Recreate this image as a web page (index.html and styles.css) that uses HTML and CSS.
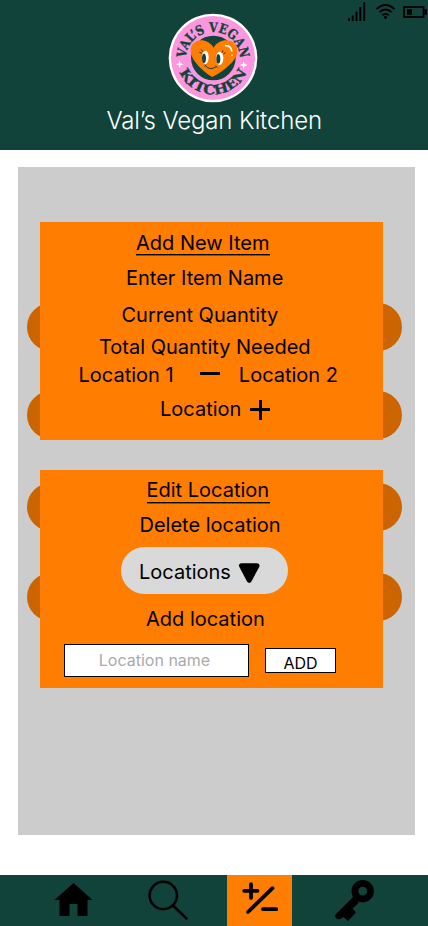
FILE: index.html
```
<!DOCTYPE html>
<html lang="en">
<head>
    <meta charset="UTF-8">
    <meta name="viewport" content="width=device-width, initial-scale=1.0">
    <title>Val’s Vegan Kitchen</title>
    <link rel="stylesheet" href="styles.css">
</head>
<body>
    <header>
        <svg class="status" viewBox="0 0 90 28">
            <path d="M11 18v3M14.7 15.500v5.500M18.500 11.500v9.500M22.300 7v14M26.200 2.300v18.700" stroke="#000" stroke-width="1.900" fill="none"/>
            <path d="M38.500 9.200Q47.500 0.800 56.500 9.200M41.500 12.200Q47.500 6.800 53.500 12.200M44.400 15.200Q47.500 12.500 50.600 15.200" stroke="#000" stroke-width="1.800" fill="none"/>
            <circle cx="47.500" cy="17.300" r="1.600"/>
            <rect x="66" y="7" width="19.500" height="10" fill="none" stroke="#000" stroke-width="1.800"/>
            <rect x="69" y="9.300" width="5" height="5.500"/>
            <rect x="86.300" y="9.300" width="2.600" height="5.500"/>
        </svg>
        <svg class="logo" viewBox="0 0 270 270">
            <defs>
                <path id="top-arc" d="M54 138A81 81 0 0 1 216 138"/>
                <path id="bottom-arc" d="M26 135A109 109 0 0 0 244 135"/>
            </defs>
            <circle cx="135" cy="135" r="133" fill="#fff"/>
            <circle cx="135" cy="135" r="126" fill="#fb96df"/>
            <circle cx="136" cy="135" r="67" fill="#11433a"/>
            <path d="M133 192C108 177 68 142 68 113C68 78 114 69 137 104C158 69 208 78 208 114C208 145 161 178 133 192Z" fill="#ff7d00"/>
            <path d="M173 98Q189 98 191 114" fill="none" stroke="#fff" stroke-width="5" stroke-linecap="round"/>
            <circle cx="192" cy="127" r="2.500" fill="#fff"/>
            <ellipse cx="112" cy="133" rx="10" ry="20" fill="#fff"/>
            <ellipse cx="155" cy="136" rx="11" ry="20" fill="#fff"/>
            <ellipse cx="108" cy="136" rx="6" ry="14" fill="#11433a"/>
            <ellipse cx="151" cy="138" rx="6" ry="14" fill="#11433a"/>
            <path d="M112 158Q125 174 145 161M109 160l6-4M142 158l6 6M102 121l-8-3M105 116l-6-7M162 119l3-7M166 123l7-4" fill="none" stroke="#11433a" stroke-width="3"/>
            <path d="M35 142l3 9 9 3-9 3-3 9-3-9-9-3 9-3zM227 144l3 9 9 3-9 3-3 9-3-9-9-3 9-3z" fill="#fff"/>
            <text class="logo-text"><textPath href="#top-arc" startOffset="3" textLength="249" lengthAdjust="spacingAndGlyphs">VAL’S VEGAN</textPath></text>
            <text class="logo-text"><textPath href="#bottom-arc" startOffset="43" textLength="256" lengthAdjust="spacingAndGlyphs">KITCHEN</textPath></text>
        </svg>
        <h1>Val’s Vegan Kitchen</h1>
    </header>
    <main>
        <section class="card add-item">
            <h2>Add New Item</h2>
            <p class="item-name">Enter Item Name</p>
            <p class="current">Current Quantity</p>
            <p class="total">Total Quantity Needed</p>
            <div class="locations">
                <span>Location 1</span>
                <svg class="minus" viewBox="0 0 20 20"><path d="M0 8.500h20" stroke="#000" stroke-width="3"/></svg>
                <span>Location 2</span>
            </div>
            <div class="new-location">
                <span>Location</span>
                <svg class="plus" viewBox="0 0 20 20"><path d="M0 9.500h20M10.500 0v20" stroke="#000" stroke-width="3"/></svg>
            </div>
        </section>
        <section class="card edit-location">
            <h2>Edit Location</h2>
            <p class="delete">Delete location</p>
            <div class="dropdown">
                <span>Locations</span>
                <svg viewBox="0 0 22 20"><path d="M3.500 2.700h15.500L11.200 17.300z" stroke="#000" stroke-width="5" stroke-linejoin="round"/></svg>
            </div>
            <p class="add">Add location</p>
            <form>
                <input type="text" placeholder="Location name">
                <button type="button">ADD</button>
            </form>
        </section>
    </main>
    <nav>
        <a href="#home" class="home">
            <svg viewBox="0 0 38 34"><path d="M19 0L38 17h-5v16H23V21h-8v12H5V17H0z"/></svg>
        </a>
        <a href="#search" class="search">
            <svg viewBox="0 0 41 41"><path d="M29 15.500A13.700 13.700 0 1 1 1.600 15.500A13.700 13.700 0 1 1 29 15.500M25 25.500L38.500 38.500" fill="none" stroke="#000" stroke-width="2.600" stroke-linecap="round"/></svg>
        </a>
        <a href="#edit" class="edit active">
            <svg viewBox="0 0 36 33"><path d="M2.200 8.800h13.300M9 2.200v13.700M6 30L30.500 6.200M21 27.200h13.300" fill="none" stroke="#000" stroke-width="3.800" stroke-linecap="round"/></svg>
        </a>
        <a href="#login" class="login">
            <svg viewBox="0 0 40 42">
                <circle cx="27.700" cy="11.200" r="7.800" fill="none" stroke="#000" stroke-width="6.800"/>
                <path d="M19 18.500L24 22.500 17.500 28.500 21 32.500 13 41 8.500 37 5.500 39Q2 40 .500 37.500Q-.500 35.500 1.500 33.500L19 16z"/>
            </svg>
        </a>
    </nav>
</body>
</html>
```
FILE: styles.css
```
body {
    margin: 0;
    width: 428px;
    height: 926px;
    display: flex;
    flex-direction: column;
    background-color: #fff;
    color: #000;
    font-family: Inter, sans-serif;
    font-size: 20px;
    line-height: 24px;
}

* {
    box-sizing: border-box;
}

svg {
    display: block;
    flex: none;
}

h2, p {
    margin: 0;
    font-size: 20px;
    font-weight: 400;
}

header {
    position: relative;
    height: 150px;
    padding-top: 13px;
    background-color: #11433a;
    color: white;
}

    header h1 {
        margin: 3px 0 0 106.500px;
        font-size: 24px;
        line-height: 30px;
        font-weight: 350;
        letter-spacing: -0.15px;
        white-space: nowrap;
    }

.status {
    position: absolute;
    top: 0;
    right: 0;
    width: 90px;
    height: 28px;
}

.logo {
    width: 90px;
    height: 90px;
    margin-left: 167.600px;
}

.logo-text {
    font-family: "DejaVu Serif", serif;
    font-weight: 700;
    font-size: 40px;
    fill: #11433a;
    stroke: #11433a;
    stroke-width: 1px;
}

main {
    width: 397px;
    height: 668px;
    margin: 17px 0 40px 18px;
    padding: 55px 32px 0 22px;
    display: flex;
    flex-direction: column;
    gap: 30px;
    background-color: #ccc;
}

.card {
    position: relative;
    z-index: 0;
    height: 218px;
    background-color: #ff7d00;
    white-space: nowrap;
}

    .card h2 {
        width: max-content;
        height: 24px;
        padding-right: 0.5px;
        border-bottom: 1px solid #000;
        box-shadow: 0 1px 0 rgba(0, 0, 0, 0.4);
    }

    /* rounded tabs sticking out on both sides */
    .card::before,
    .card::after {
        content: "";
        position: absolute;
        z-index: -1;
        left: -13px;
        right: -19px;
        height: 48px;
        border-radius: 24px;
        background: linear-gradient(to right, #cc6400 13px, #ff7d00 13px, #ff7d00 356px, #cc6400 356px);
    }

.add-item {
    padding-top: 9px;
}

    .add-item::before {
        top: 81.400px;
    }

    .add-item::after {
        top: 169.400px;
    }

    .add-item h2 {
        margin-left: 96px;
    }

.item-name {
    margin: 11px 0 0 86px;
}

.current {
    margin: 13px 0 0 81.500px;
}

.total {
    margin: 8px 0 0 59px;
}

.locations {
    display: flex;
    margin: 4px 0 0 38.500px;
}

.minus {
    width: 20px;
    height: 20px;
    margin: 2px 19px 0 auto;
}

.locations span:last-child {
    margin-right: 45px;
}

.new-location {
    display: flex;
    gap: 9px;
    margin: 10px 0 0 120px;
}

.plus {
    width: 20px;
    height: 20px;
    margin-top: 3px;
}

.edit-location {
    padding-top: 8px;
}

    .edit-location::before {
        top: 13.400px;
    }

    .edit-location::after {
        top: 103.400px;
    }

    .edit-location h2 {
        height: 25px;
        margin-left: 106.500px;
        border-bottom-width: 1px;
    }

.delete {
    margin: 10px 0 0 99.500px;
}

.dropdown {
    display: flex;
    width: 167px;
    height: 47px;
    margin: 10px 0 0 81px;
    padding: 13px 0 0 18px;
    border-radius: 24px;
    background-color: #d9d9d9;
}

    .dropdown svg {
        width: 22px;
        height: 20px;
        margin: 3px 0 0 7px;
    }

.add {
    margin: 13px 0 0 106px;
}

form {
    display: flex;
    gap: 16px;
    margin: 13px 0 0 24px;
}

    form input,
    form button {
        border: 1px solid #000;
        border-radius: 0;
        background-color: #fff;
        color: #000;
        font: 16px Inter, sans-serif;
    }

    form input {
        width: 185px;
        height: 33px;
        padding: 0 4px 2px 0;
        text-align: center;
    }

    form input::placeholder {
        color: #aaa;
    }

    form button {
        width: 71px;
        height: 25px;
        margin-top: 4px;
        padding: 4px 0 0;
        line-height: 20px;
    }

nav {
    display: flex;
    height: 51px;
    background-color: #11433a;
}

    nav a {
        display: block;
        color: #000;
    }

.home {
    width: 148px;
    padding: 8px 0 0 54px;
}

    .home svg {
        width: 39px;
        height: 34px;
    }

.search {
    width: 79px;
    padding-top: 5px;
}

    .search svg {
        width: 41px;
        height: 41px;
        overflow: visible;
    }

.edit {
    width: 65px;
    padding: 7px 0 0 15px;
}

    .edit svg {
        width: 36px;
        height: 33px;
    }

.active {
    background-color: #ff7d00;
}

.login {
    padding: 5px 0 0 43px;
}

    .login svg {
        width: 40px;
        height: 42px;
    }
```
